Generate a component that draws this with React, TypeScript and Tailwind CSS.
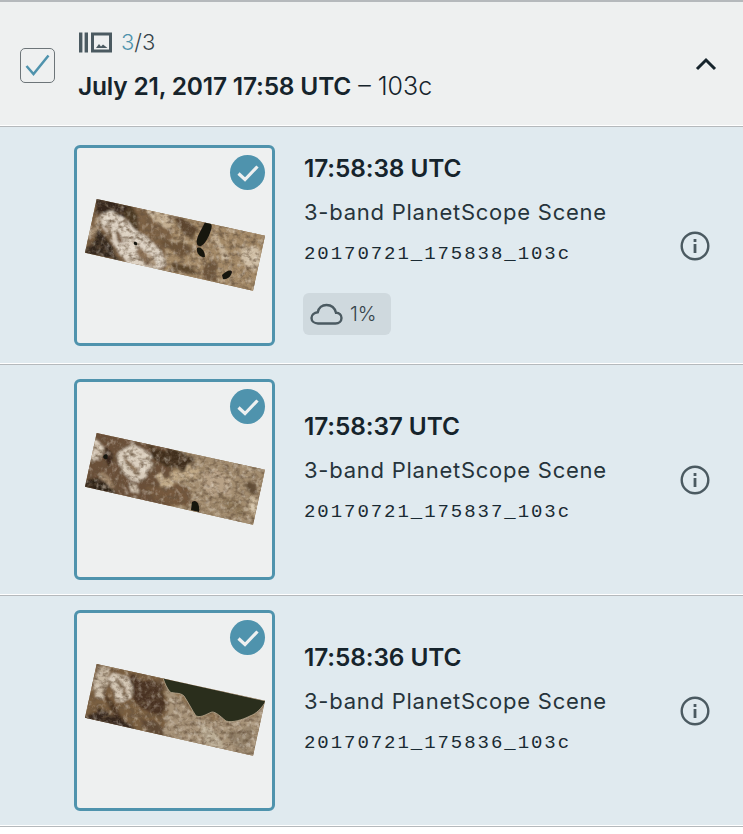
import React from 'react'

const sans = "font-['Inter','Noto_Sans',sans-serif]"

// the three scene footprints share one outline, only the ground differs
const OUTLINE = '22.7,54 191,90.7 179,145.7 11,107.7'

type Blob = { d: string; fill: string }

const SCENE_A: Blob[] = [
  { d: 'M5 48 L100 62 L95 130 L0 118 Z', fill: '#7d6245' },
  { d: 'M100 66 L195 88 L182 150 L90 130 Z', fill: '#a48a68' },
  { d: 'M20 50 L58 60 C62 72 52 76 44 70 C36 66 30 68 22 72 Z', fill: '#35271a' },
  { d: 'M56 60 C64 66 66 78 62 86 C56 80 52 72 50 66 Z', fill: '#4a3724' },
  { d: 'M28 70 C40 64 52 72 60 84 C72 92 88 102 92 118 C86 128 68 128 56 122 C46 108 30 92 28 70 Z', fill: '#ddd2c3' },
  { d: 'M62 100 C68 104 74 108 80 118 L72 120 C66 114 62 108 62 100 Z', fill: '#8a7055' },
  { d: 'M42 84 C46 88 50 94 52 100 L47 100 C44 96 42 90 42 84 Z', fill: '#7a6048' },
  { d: 'M34 74 C38 82 36 88 40 94 L34 92 Z', fill: '#8f7559' },
  { d: 'M68 104 C76 108 82 114 84 122 L78 122 Z', fill: '#a68f75' },
  { d: 'M10 108 C18 100 22 94 24 84 C32 90 40 104 44 116 Z', fill: '#32251a' },
  { d: 'M14 84 C20 76 24 74 28 74 C26 82 22 88 16 92 Z', fill: '#b39c80' },
  { d: 'M70 62 C82 66 92 66 104 70 L96 84 C86 82 78 76 70 62 Z', fill: '#c2ad90' },
  { d: 'M102 72 C110 74 118 78 124 84 L118 94 C110 92 104 84 102 72 Z', fill: '#5c452d' },
  { d: 'M84 96 C96 94 108 96 118 102 L112 112 C102 110 92 104 84 96 Z', fill: '#6c5338' },
  { d: 'M96 116 C106 118 118 122 126 130 L100 128 Z', fill: '#5a442c' },
  { d: 'M140 84 C146 98 152 108 158 114 L150 116 C144 108 140 98 140 84 Z', fill: '#c9b69b' },
  { d: 'M166 104 C174 100 182 100 186 104 L180 126 C172 124 166 114 166 104 Z', fill: '#d0bfa6' },
  { d: 'M128 120 C134 112 140 112 144 118 L142 136 L130 134 Z', fill: '#6d553b' },
]
const SCENE_A_DARK = [
  'M131 77 C137 76 139 80 137 85 C135 92 131 99 127 101 C122 102 122 96 124 91 C126 86 129 82 131 77 Z',
  'M123 103 C127 101 131 106 131 112 C127 113 122 109 123 103 Z',
  'M148 130 C152 126 157 124 158 127 C157 132 152 135 149 134 Z',
  'M60 97 C62 96 64 98 63 100 C61 101 59 99 60 97 Z',
]

const SCENE_B: Blob[] = [
  { d: 'M5 48 L100 62 L95 130 L0 118 Z', fill: '#6a5037' },
  { d: 'M104 70 L195 88 L182 150 L100 132 Z', fill: '#a38d70' },
  { d: 'M18 58 C28 62 30 70 26 80 L14 84 Z', fill: '#d2c4b2' },
  { d: 'M42 74 C50 64 68 66 78 76 C80 86 74 98 66 104 C56 104 44 92 42 74 Z', fill: '#d8ccbb' },
  { d: 'M52 78 C56 84 60 88 66 90 L60 94 C56 90 52 84 52 78 Z', fill: '#8f7559' },
  { d: 'M56 106 C62 104 66 106 66 116 C62 118 56 114 56 106 Z', fill: '#d6c8b6' },
  { d: 'M30 66 C36 70 40 78 38 90 C32 86 28 76 30 66 Z', fill: '#37281a' },
  { d: 'M74 66 L118 76 L116 90 C102 90 86 86 78 78 Z', fill: '#3f2f1e' },
  { d: 'M10 104 C22 94 34 102 44 118 L10 110 Z', fill: '#2d2116' },
  { d: 'M24 90 C30 92 36 98 38 106 C30 106 24 100 24 90 Z', fill: '#a58c70' },
  { d: 'M84 100 C96 92 110 88 126 90 L122 100 C108 100 96 104 84 110 Z', fill: '#c0a987' },
  { d: 'M72 108 C84 104 100 104 116 110 L116 128 L82 122 Z', fill: '#75593c' },
  { d: 'M128 96 C140 88 156 94 158 106 C152 122 136 120 128 110 Z', fill: '#b7a186' },
  { d: 'M150 120 C160 116 170 124 172 136 L152 134 Z', fill: '#8b7457' },
  { d: 'M172 102 C180 100 184 106 182 114 C176 116 170 110 172 102 Z', fill: '#5f4b35' },
  { d: 'M176 118 C182 116 184 122 180 134 C174 132 172 124 176 118 Z', fill: '#cdbb9f' },
]
const SCENE_B_DARK = ['M118 123 C122 120 126 124 125 133 L117 131 Z', 'M30 76 C33 74 35 77 33 80 C30 81 28 78 30 76 Z']

const SCENE_C: Blob[] = [
  { d: 'M5 48 L96 62 L100 130 L0 118 Z', fill: '#7a5e41' },
  { d: 'M24 56 L34 58 C36 70 32 80 26 88 L18 84 Z', fill: '#c8b9a4' },
  { d: 'M40 62 C50 62 58 68 60 78 C56 92 50 96 44 94 C38 84 36 72 40 62 Z', fill: '#d3c6b4' },
  { d: 'M46 70 C50 76 52 80 50 86 L46 84 Z', fill: '#7f664b' },
  { d: 'M58 66 C70 70 78 74 88 72 C92 86 92 96 90 106 C78 106 66 100 60 90 Z', fill: '#4a3321' },
  { d: 'M30 84 C38 90 44 98 48 108 C40 108 32 98 30 84 Z', fill: '#4c3522' },
  { d: 'M10 106 C24 96 46 102 64 122 L10 112 Z', fill: '#34261a' },
  { d: 'M66 108 C76 108 86 112 96 128 L74 124 Z', fill: '#5d4631' },
  { d: 'M90 70 C98 84 112 92 118 104 C128 110 150 116 192 98 L182 150 L86 132 C96 116 96 92 90 70 Z', fill: '#a8947a' },
  { d: 'M124 112 C136 116 146 122 150 138 L132 134 C130 126 128 118 124 112 Z', fill: '#bcae96' },
  { d: 'M152 122 C162 118 172 122 180 118 L176 144 C166 142 156 134 152 122 Z', fill: '#96846c' },
]
const SCENE_C_WATER = 'M89 68 L192 91 C188 98 182 104 176 106 C168 110 158 113 152 111 C146 106 142 102 138 102 C132 104 128 108 122 106 C118 100 114 92 110 86 C106 82 100 84 96 82 C93 78 91 74 89 68 Z'

function Footprint({ id, seed, blobs, dark, water }: { id: string; seed: number; blobs: Blob[]; dark: string[]; water?: string }) {
  return (
    <svg viewBox="3 3 195 195" className="w-full h-full block">
      <defs>
        <clipPath id={`clip-${id}`}>
          <polygon points={OUTLINE} />
        </clipPath>
        <filter id={`rough-${id}`} x="-10%" y="-10%" width="120%" height="120%">
          <feTurbulence type="fractalNoise" baseFrequency="0.09" numOctaves="3" seed={seed} result="n" />
          <feDisplacementMap in="SourceGraphic" in2="n" scale="12" />
          <feGaussianBlur stdDeviation="0.8" />
        </filter>
        <filter id={`dark-${id}`} x="0" y="0" width="100%" height="100%">
          <feTurbulence type="fractalNoise" baseFrequency="0.18 0.24" numOctaves="3" seed={seed + 1} />
          <feColorMatrix values="0 0 0 0 0.14  0 0 0 0 0.09  0 0 0 0 0.05  2.4 0 0 0 -1" />
          <feGaussianBlur stdDeviation="0.4" />
        </filter>
        <filter id={`light-${id}`} x="0" y="0" width="100%" height="100%">
          <feTurbulence type="fractalNoise" baseFrequency="0.22 0.18" numOctaves="3" seed={seed + 2} />
          <feColorMatrix values="0 0 0 0 0.95  0 0 0 0 0.9  0 0 0 0 0.82  2.4 0 0 0 -1.15" />
          <feGaussianBlur stdDeviation="0.4" />
        </filter>
        <filter id={`soft-${id}`}>
          <feGaussianBlur stdDeviation="0.6" />
        </filter>
      </defs>
      <g clipPath={`url(#clip-${id})`}>
        <rect width="200" height="200" fill="#8f7555" />
        <g filter={`url(#rough-${id})`}>
          {blobs.map((b, i) => <path key={i} d={b.d} fill={b.fill} />)}
        </g>
        <rect width="200" height="200" filter={`url(#dark-${id})`} opacity="0.8" />
        <rect width="200" height="200" filter={`url(#light-${id})`} opacity="0.4" />
        <g filter={`url(#soft-${id})`}>
          {water && <path d={water} fill="#2b2d1d" stroke="#b9a98f" strokeWidth="0.8" />}
          {dark.map((d, i) => <path key={i} d={d} fill="#17140f" />)}
        </g>
      </g>
    </svg>
  )
}

function Info() {
  return (
    <svg width="30" height="30" viewBox="0 0 30 30" fill="none">
      <circle cx="15" cy="15" r="13.3" stroke="#4b5a61" strokeWidth="2.4" />
      <rect x="13.6" y="13" width="2.8" height="9" fill="#4b5a61" />
      <rect x="13.6" y="8" width="2.8" height="3" fill="#4b5a61" />
    </svg>
  )
}

function SceneRow({ time, id, h, thumbTop, infoPad, cloud, scene }: {
  time: string; id: string; h: string; thumbTop: string; infoPad: string; cloud?: string; scene: React.ReactNode
}) {
  return (
    <>
      <div className={`flex items-start bg-[#e0eaef] pl-[74px] pr-[33px] ${h} ${thumbTop}`}>
        <div className="relative w-[201px] h-[201px] shrink-0 rounded-[6px] border-[3px] border-[#4f93ad] bg-[#eef0f0]">
          {scene}
          <div className="absolute right-[7px] top-[7px] w-[35px] h-[35px] rounded-full bg-[#4f93ad] flex items-center justify-center">
            <svg width="24" height="20" viewBox="0 0 24 20" fill="none">
              <path d="M2.5 10.5 L9 16.5 L21.5 3.5" stroke="#eef0f0" strokeWidth="3.2" />
            </svg>
          </div>
        </div>
        <div className={`ml-[29px] flex-1 ${infoPad}`}>
          <div className="text-[24.4px] leading-[28px] font-semibold text-[#16242c] tracking-[-0.1px]">{time}</div>
          <div className="mt-[16px] text-[22px] leading-[28px] text-[#26343b] tracking-[0.75px]">3-band PlanetScope Scene</div>
          <div className="mt-[17px] font-['Liberation_Mono',monospace] text-[19px] leading-[22px] tracking-[1.95px] text-[#1a2a33]">{id}</div>
          {cloud && (
            <div className="mt-[28px] ml-[-1px] w-[88px] h-[42px] rounded-[6px] bg-[#cfd9de] flex items-center pl-[7px] gap-[7px] text-[20px] font-light text-[#35434a]">
              <svg width="33" height="22" viewBox="0 0 33 22" fill="none" stroke="#4b5a61" strokeWidth="2.4">
                <path d="M8 20.5 H25.5 C29 20.5 31.5 18 31.5 15 C31.5 12 29 9.6 26 9.8 C24.8 4.8 21 2 16.5 2 C12 2 8.6 5 7.8 9.2 C4.2 9.6 1.5 12 1.5 15 C1.5 18.2 4.4 20.5 8 20.5 Z" />
              </svg>
              <span>{cloud}</span>
            </div>
          )}
        </div>
        <div className="h-[201px] flex items-center"><Info /></div>
      </div>
      <div className="h-[2px] border-t border-white bg-[#b5b9bc]" />
    </>
  )
}

const rows = [
  { time: '17:58:38 UTC', id: '20170721_175838_103c', h: 'h-[236px]', thumbTop: 'pt-[18px]', infoPad: 'pt-[9px]', cloud: '1%',
    scene: <Footprint id="a" seed={11} blobs={SCENE_A} dark={SCENE_A_DARK} /> },
  { time: '17:58:37 UTC', id: '20170721_175837_103c', h: 'h-[229px]', thumbTop: 'pt-[14px]', infoPad: 'pt-[33px]',
    scene: <Footprint id="b" seed={23} blobs={SCENE_B} dark={SCENE_B_DARK} /> },
  { time: '17:58:36 UTC', id: '20170721_175836_103c', h: 'h-[229px]', thumbTop: 'pt-[14px]', infoPad: 'pt-[33px]',
    scene: <Footprint id="c" seed={37} blobs={SCENE_C} dark={[]} water={SCENE_C_WATER} /> },
]

export default function App() {
  return (
    <div className={`w-[743px] h-[834px] bg-white ${sans}`}>
      <div className="h-[125px] bg-[#eef0f0] border-t-2 border-[#b5b9bc] flex items-center pl-[20px] pr-[26px]">
        <div className="w-[35px] h-[35px] rounded-[5px] border border-[#6d7579] flex items-center justify-center mt-[3px]">
          <svg width="28" height="24" viewBox="0 0 28 24" fill="none">
            <path d="M2.5 13 L9.5 21 L24.5 2.5" stroke="#4f93ad" strokeWidth="2.5" />
          </svg>
        </div>
        <div className="ml-[23px] flex-1 mt-[2px]">
          <div className="flex items-center h-[24px] mt-[1px] text-[22px] font-light text-[#35434a]">
            <svg width="34" height="21" viewBox="0 0 34 21" fill="none">
              <rect x="1" y="0.5" width="3.4" height="20" fill="#4b5a61" />
              <rect x="6.6" y="0.5" width="3.4" height="20" fill="#4b5a61" />
              <rect x="14.5" y="2" width="18" height="17" stroke="#4b5a61" strokeWidth="3" />
              <path d="M18 16 L21 12 L23 14.5 L25 12.5 L29.5 16 Z" fill="#4b5a61" />
            </svg>
            <span className="ml-[9px] text-[#4f93ad]">3</span>
            <span>/3</span>
          </div>
          <div className="mt-[18px] text-[25px] leading-[28px] text-[#16242c]">
            <span className="text-[24.5px] font-semibold tracking-[-0.2px]">July 21, 2017 17:58 UTC</span>
            <span className="font-light"> – 103c</span>
          </div>
        </div>
        <svg width="22" height="14" viewBox="0 0 22 14" fill="none">
          <path d="M2 12 L11 3 L20 12" stroke="#16242c" strokeWidth="3" />
        </svg>
      </div>
      <div className="h-[2px] border-t border-white bg-[#b5b9bc]" />
      {rows.map(r => (
        <SceneRow key={r.id} time={r.time} id={r.id} h={r.h} thumbTop={r.thumbTop} infoPad={r.infoPad} cloud={r.cloud} scene={r.scene} />
      ))}
    </div>
  )
}
